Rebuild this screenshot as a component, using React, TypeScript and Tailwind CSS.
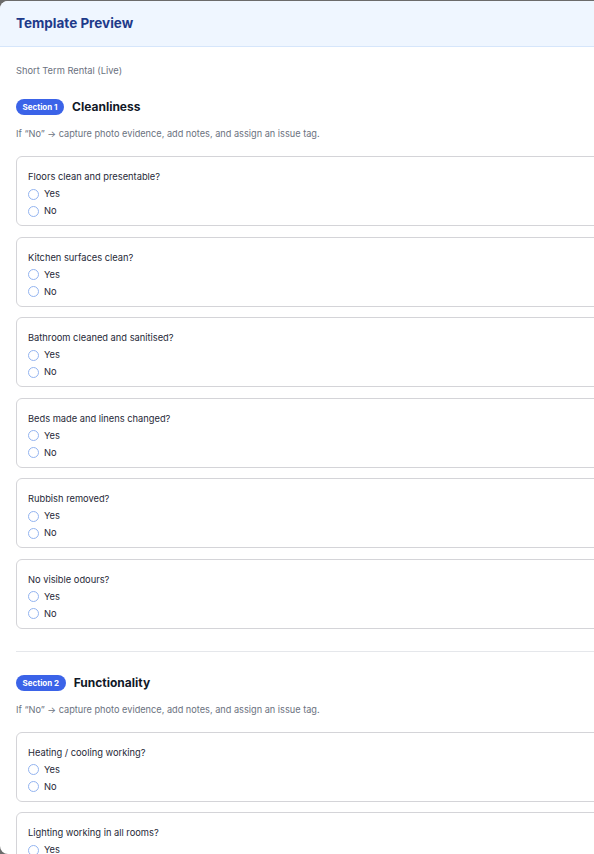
import React from "react";

interface Section {
  num: number;
  title: string;
  questions: string[];
}

const sections: Section[] = [
  {
    num: 1,
    title: "Cleanliness",
    questions: [
      "Floors clean and presentable?",
      "Kitchen surfaces clean?",
      "Bathroom cleaned and sanitised?",
      "Beds made and linens changed?",
      "Rubbish removed?",
      "No visible odours?",
    ],
  },
  {
    num: 2,
    title: "Functionality",
    questions: ["Heating / cooling working?", "Lighting working in all rooms?", "Appliances working?"],
  },
];

const RadioRow = ({ label }: { label: string }) => (
  <label className="flex items-center h-4 gap-[5px]">
    <span className="w-[11px] h-[11px] rounded-full border border-[#93b4f0] bg-white shrink-0" />
    <span className="text-[9.3px] leading-[14px] text-[#1f2937]">{label}</span>
  </label>
);

const QuestionCard = ({ text }: { text: string }) => (
  <div className="border border-[#d4d4d8] rounded-md bg-white pl-[11px] pr-3 pt-[13px] pb-[5px] h-[70px]">
    <div className="text-[9.3px] leading-[14px] text-[#1f2937]">{text}</div>
    <div className="mt-[2px] flex flex-col gap-[1px]">
      <RadioRow label="Yes" />
      <RadioRow label="No" />
    </div>
  </div>
);

const SectionBlock = ({ section }: { section: Section }) => (
  <div>
    <div className="flex items-center h-5 gap-2">
      <span className="h-4 px-[6.5px] rounded-full bg-[#3b63e8] text-white text-[8px] font-bold flex items-center justify-center">
        Section {section.num}
      </span>
      <h2 className="text-[12px] font-bold text-[#111827]">{section.title}</h2>
    </div>
    <p className="mt-[10px] text-[9.2px] leading-[14px] text-[#6b7280]">
      If “No” → capture photo evidence, add notes, and assign an issue tag.
    </p>
    <div className="mt-[15px] flex flex-col gap-[10.5px]">
      {section.questions.map((q) => (
        <QuestionCard key={q} text={q} />
      ))}
    </div>
  </div>
);

export default function App() {
  return (
    <div
      className="w-[594px] h-[854px] overflow-hidden bg-[#6b6b6b] pt-px"
      style={{ fontFamily: "Inter, 'Noto Sans', sans-serif" }}
    >
      <div className="w-[660px] h-[853px] bg-white rounded-lg overflow-hidden">
        <div className="h-[46px] bg-[#eff6ff] border-b border-[#d6e6fb] px-4 flex items-center">
          <h1 className="text-[13.5px] font-bold text-[#1e3a8a]">Template Preview</h1>
        </div>
        <div className="px-4">
          <p className="pt-[17px] text-[9.3px] leading-[14px] text-[#6b7280]">Short Term Rental (Live)</p>
          <div className="mt-[19px]">
            <SectionBlock section={sections[0]} />
          </div>
          <div className="mt-[22px] h-px bg-[#e5e7eb]" />
          <div className="mt-[21px]">
            <SectionBlock section={sections[1]} />
          </div>
        </div>
      </div>
    </div>
  );
}
